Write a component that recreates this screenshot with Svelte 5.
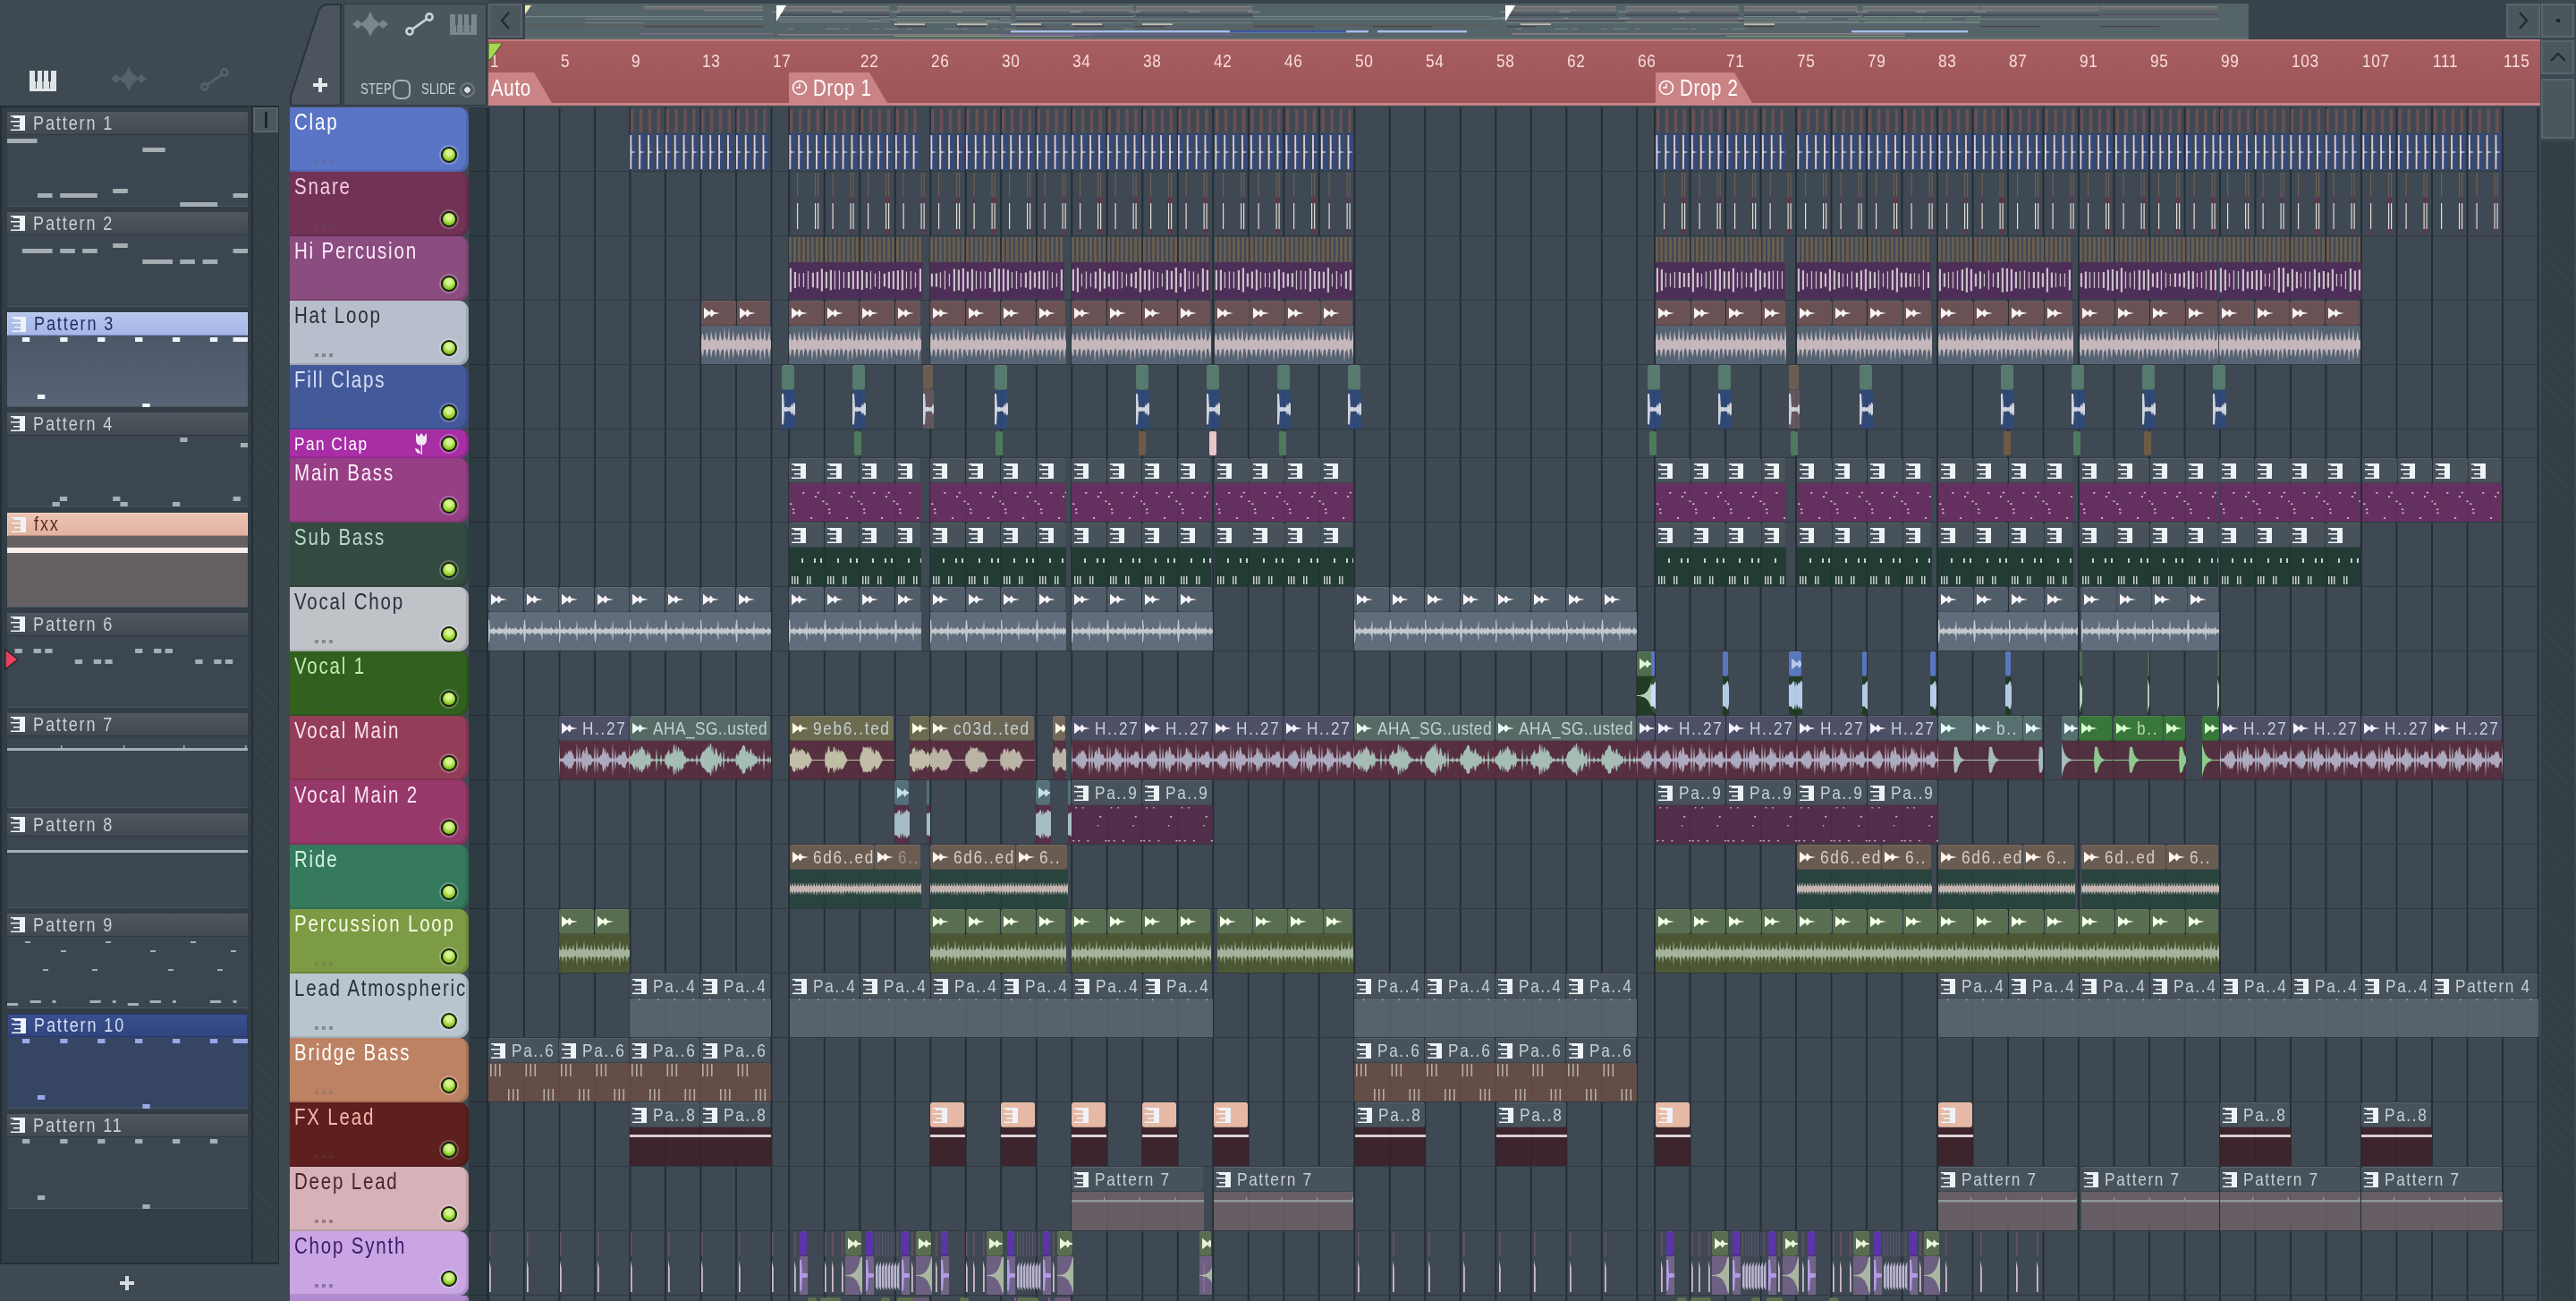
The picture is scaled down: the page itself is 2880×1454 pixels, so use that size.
<script>
  const BAR = 19.75;
  const LANE_X = 546;
  const bx = (b) => 0.5 + BAR * (b - 1);
  const lx = (x) => x - LANE_X;

  function rng(seed) {
    let s = seed * 9301 + 49297;
    return () => {
      s = (s * 9301 + 49297) % 233280;
      return s / 233280;
    };
  }

  function amp(type, x, n) {
    if (type === "hat") {
      const tri = 1 - Math.abs((x % 4.9) - 1.5) / 1.7;
      return Math.max(0.2 + 0.14 * n, tri * (0.8 + 0.2 * n));
    }
    if (type === "chop") {
      if (x % 19.75 < 1.2) return 0.62;
      if (x % 6 < 1) return 0.26;
      return 0.07 + 0.1 * n;
    }
    if (type === "hmain") {
      const q = x % 19.75;
      if (q < 1) return 0.95;
      if (q > 3 && q < 4) return 0.6 + 0.2 * n;
      if (q > 5 && q < 17) return (0.2 + 0.42 * n) * (0.5 + 0.7 * Math.sin((Math.PI * (q - 5)) / 12));
      return 0.06 + 0.08 * n;
    }
    if (type === "aha") {
      const q = x % 39.5;
      if (q < 24) return (0.25 + 0.6 * n) * (0.4 + 0.7 * Math.sin((Math.PI * q) / 24));
      return x % 5 < 1 ? 0.6 * n + 0.1 : 0.05;
    }
    if (type === "burst") {
      const q = x % 39.5;
      if (q < 20) return (0.42 + 0.5 * n) * (q < 3 ? 0.6 : 1) * (1 - q / 60);
      return q < 25 ? (0.5 * (25 - q)) / 5 : 0.03;
    }
    if (type === "pluck") {
      const q = (x + 21.5) % 39.5;
      if (q < 3) return 0.72;
      return q < 12 ? Math.max(0.03, 0.72 * Math.exp(-(q - 3) / 2.6)) : 0.025;
    }
    if (type === "hit") return Math.max(0.025, 0.95 * Math.exp(-x / 3.5));
    if (type === "ride") return 0.13 + (x % 3 < 1 ? 0.2 : 0) + 0.05 * n;
    if (type === "perc") return 0.14 + (x % 4 < 1 ? 0.5 * n + 0.12 : 0.14 * n);
    if (type === "blob") return 0.45 + 0.5 * n;
    if (type === "rev") return Math.max(0.03, 0.95 * Math.exp((x - 17) / 4));
    if (type === "spike") return x < 2.5 ? 0.85 : x < 10 ? 0.08 + 0.08 * n : 0.5 * n;
    return 0.1;
  }

  function wave(type, w, seed = 3) {
    const h = 43;
    const mid = h / 2;
    const r = rng(seed);
    const top = [];
    const bottom = [];
    for (let x = 0; x <= w; x += 1) {
      const a = Math.min(1, amp(type, x, r())) * (mid - 1);
      top.push(`${x} ${(mid - a).toFixed(1)}`);
      bottom.unshift(`${x} ${(mid + a * (0.85 + 0.15 * r())).toFixed(1)}`);
    }
    return `M${top.join("L")}L${bottom.join("L")}Z`;
  }

  // small note marks for pattern clips, repeat every 39.5px
  function marks(kind, w) {
    const out = [];
    const r = rng(kind.length * 7);
    const base = [];
    if (kind === "bridge") {
      [0, 5, 10].forEach((o) => {
        base.push({ x: 2 + o, y: 1, w: 1.6, h: 14 });
        base.push({ x: 22 + o, y: 29, w: 1.6, h: 13 });
      });
    } else if (kind === "main") {
      for (let i = 0; i < 8; i++) base.push({ x: r() * 38, y: 3 + r() * 36, w: 2.2, h: 1.6 });
    } else if (kind === "sub") {
      [3, 6, 9, 20, 23].forEach((x) => base.push({ x, y: 32, w: 1.5, h: 9 }));
      [14, 28, 35].forEach((x) => base.push({ x, y: 12, w: 2, h: 5 }));
    } else if (kind === "nine") {
      for (let i = 0; i < 5; i++) base.push({ x: r() * 38, y: 2 + (i % 3) * 10, w: 1.5, h: 1.5 });
      for (let i = 0; i < 4; i++) base.push({ x: r() * 38, y: 39, w: 2, h: 1.4 });
    } else if (kind === "atmos") {
      [10, 31].forEach((x) => base.push({ x, y: 0, w: 1.4, h: 2.2 }));
    }
    for (let o = 0; o < w; o += 39.5) {
      base.forEach((m) => {
        if (o + m.x < w - 1) out.push({ ...m, x: o + m.x });
      });
    }
    if (kind === "fx") out.push({ x: 0, y: 8, w, h: 3 });
    if (kind === "deep") {
      out.push({ x: 0, y: 9, w, h: 2.5 });
      for (let o = 36; o < w; o += 39.5) out.push({ x: o, y: 6, w: 1.4, h: 4 });
    }
    return out;
  }

  function tile(from, to, step, style, name) {
    const list = [];
    for (let x = from; x < to - 1; x += step) {
      list.push(clip(x, Math.min(step, to - x), style, name));
    }
    return list;
  }

  function clip(x, w, style, name = "") {
    const c = { ...style, x: lx(x), w, name };
    if (c.wave) c.d = wave(c.wave, Math.ceil(w), c.seed);
    if (c.notes) c.rects = marks(c.notes, w);
    return c;
  }

  const hat = { icon: "wave", hc: "#6a5153", bc: "#5a6878", wf: "#dccacd", wave: "hat" };
  const vchop = { icon: "wave", hc: "#505c68", bc: "#677483", wf: "#d8dde2", wave: "chop" };
  const hMain = { icon: "wave", hc: "#4d4f66", bc: "#5a2c3e", wf: "#bfb9d0", wave: "hmain", ic: "#f4eefc" };
  const aha = { icon: "wave", hc: "#566a66", bc: "#5a2c3e", wf: "#b7d0c7", wave: "aha", ic: "#e8fbf2" };
  const eb = { icon: "wave", hc: "#6c6b50", bc: "#5a2c3e", wf: "#d6d2b4", wave: "burst", ic: "#fbfbe6" };
  const c03 = { icon: "wave", hc: "#6b6656", bc: "#5a2c3e", wf: "#cfc6b4", wave: "burst", seed: 8, ic: "#fbfbe6" };
  const teal = { icon: "wave", hc: "#55706e", bc: "#552c3c", wf: "#b7ced0", wave: "pluck", ic: "#eafcff" };
  const green = { icon: "wave", hc: "#38763a", bc: "#552c3c", wf: "#9be09b", wave: "pluck", ic: "#d8ffd0", tc: "#b9d8b0" };
  const rideS = { icon: "wave", hc: "#6b5c52", bc: "#26443c", wf: "#d9c6bf", wave: "ride", ic: "#fff6ee", tc: "#d8cfc8" };
  const percS = { icon: "wave", hc: "#596d50", bc: "#4d5a2f", wf: "#b5c6a8", wave: "perc", ic: "#f4ffe8" };
  const pat = { icon: "pat", hc: "#48525b", bc: "#5a6570" };
  const mainB = { ...pat, bc: "#6a2d62", notes: "main", nf: "#e6d8e6" };
  const subB = { ...pat, bc: "#1f3931", notes: "sub", nf: "#dfe8e2" };
  const nine = { ...pat, bc: "#542b49", notes: "nine", nf: "#d8c8d6" };
  const atmos = { ...pat, bc: "#5c6772", notes: "atmos", nf: "#aab4bc" };
  const bridge = { ...pat, bc: "#6a4e44", notes: "bridge", nf: "#c9bcb2" };
  const fxP = { ...pat, bc: "#3e1f26", notes: "fx", nf: "#f2e4e0" };
  const fxPink = { icon: "pat", hc: "#e6b9a6", bc: "#3e1f26", notes: "fx", nf: "#f6ece8" };
  const deep = { ...pat, bc: "#6e6268", notes: "deep", nf: "#9aa6a9" };

  // start and end of the repeating sections, in page px
  const drop1 = [[882, 1030], [1040, 1192], [1198, 1354], [1358, 1513]];
  const drop2 = [[1851, 1997], [2009, 2160], [2167, 2318], [2325, 2480]];
  const drop2Long = [...drop2, [2481, 2640]];
  const drop2All = [...drop2Long, [2641, 2797]];

  const inGroups = (groups, step, style, name) => groups.flatMap(([a, b]) => tile(a, b, step, style, name));

  function ticks(groups, every, draw) {
    const paths = {};
    groups.forEach(([a, b]) => {
      for (let x = a; x < b - 2; x += every) draw(x - LANE_X, paths, x - a);
    });
    return Object.entries(paths).map(([fill, d]) => ({ fill, d }));
  }
  const add = (paths, fill, d) => (paths[fill] = (paths[fill] || "") + d);
  const box = (x, y, w, h) => `M${x} ${y}h${w}v${h}h${-w}Z`;

  const clapDense = ticks([[704, 862], ...drop1, ...drop2All], 9.875, (x, p) => {
    add(p, "#6a5054", box(x + 1, 2, 3.5, 26));
    add(p, "#35497a", box(x + 0.5, 29, 6.6, 41));
    add(p, "#d8ccd2", `M${x + 0.4} 31L${x + 2.2} 31L${x + 2.4} 49L${x + 7} 50L${x + 2.4} 51L${x + 2.2} 69L${x + 0.4} 69Z`);
  });

  const snareDense = ticks([...drop1, ...drop2All], 39.5, (x, p) => {
    [9, 29, 32].forEach((o) => {
      if (x + o + LANE_X > 2797) return;
      add(p, "#6f5f52", box(x + o, 1, 1.2, 27));
      add(p, "#6b2d4e", box(x + o, 28, 1.2, 7));
      add(p, "#e4dcd2", box(x + o, 35, 1.2, 29));
      add(p, "#6b2d4e", box(x + o, 64, 1.2, 6));
    });
  });

  const r3 = rng(11);
  const hiDense = ticks([...drop1, ...drop2Long], 5, (x, p, o) => {
    const big = o % 40 < 6 || o % 40 > 24;
    add(p, "#685c50", box(x, 1, 3, 28));
    add(p, "#4e2d58", box(x, 29, 4.8, 41));
    const h = 7 + r3() * (big ? 7 : 4);
    add(p, "#c9bec6", box(x + 0.8, 49 - h, big ? 2.2 : 1.3, h * 2));
  });

  const fillXs = [874, 953, 1032, 1112, 1270, 1349, 1428, 1507, 1842, 1921, 2000, 2079, 2237, 2316, 2395, 2474];
  const fillClaps = fillXs.map((x) => {
    const brown = x === 1032 || x === 2000;
    return clip(x, brown ? 12 : 15, {
      hc: brown ? "#6a5c50" : "#577a6e",
      bc: brown ? "#6b5a60" : "#2f4a7c",
      wf: "#e6eaf4",
      wave: "spike",
    });
  });

  const panMarks = [
    [955, "#4d7a5d"], [1113, "#4d7a5d"], [1273, "#6e5a46"], [1352, "#ecc4cc"], [1430, "#4d7a5d"],
    [1844, "#4d7a5d"], [2002, "#4d7a5d"], [2240, "#6e5a46"], [2318, "#4d7a5d"], [2397, "#6e5a46"],
  ];

  const blue = { hc: "#5a76bf", bc: "#1e3a1e", wf: "#c8e2ff", wave: "blob" };
  const vocal1 = [
    clip(1830, 21, { icon: "wave", hc: "#4f6b50", bc: "#1e3a1e", wf: "#c8e8d0", wave: "rev", ic: "#dcf8d8" }),
    clip(1846, 5, blue),
    clip(1926, 7, blue),
    clip(2000, 15, { ...blue, icon: "wave", ic: "#b8c8e8" }),
    clip(2082, 6, blue),
    clip(2158, 7, blue),
    clip(2242, 7, blue),
    clip(2325, 3, { hc: "#4f6b50", bc: "#1e3a1e", wf: "#c8e8d0", wave: "hit" }),
    clip(2401, 2, { hc: "#4f6b50", bc: "#1e3a1e", wf: "#c8e8d0", wave: "hit" }),
    clip(2479, 2, { hc: "#4f6b50", bc: "#1e3a1e", wf: "#c8e8d0", wave: "hit" }),
  ];

  const chopGreen = { icon: "wave", hc: "#5a6d50", bc: "#76648a", wf: "#bccab0", wave: "rev", ic: "#e8f4d8" };
  const chopPurple = { hc: "#5a34a8", bc: "#7a6a90", wf: "#c8a8ff", wave: "spike" };
  const chopCycle = (x0) => [
    clip(x0 + 6, 9, chopPurple),
    clip(x0 + 57, 19, chopGreen),
    clip(x0 + 80, 9, chopPurple),
    clip(x0 + 120, 9, chopPurple),
    clip(x0 + 136, 18, chopGreen),
  ];
  const chopClips = [
    ...chopCycle(888),
    ...chopCycle(1046),
    clip(1341, 14, chopGreen),
    ...chopCycle(1857),
    ...chopCycle(2015),
  ];

  const thinXs = [547, 589, 626, 668, 705, 747, 784, 826, 863, 1345, 1518, 1557, 1597, 1636, 1676, 1715, 1755, 1794, 2175, 2214, 2254, 2277];
  const massXs = [];
  [888, 1046, 1857, 2015].forEach((x0) => {
    [0, 34, 42, 53, 131].forEach((o) => thinXs.push(x0 + o));
    for (let o = 91; o < 115; o += 3.4) massXs.push(x0 + o);
  });
  const chopDense = [
    ...ticks(thinXs.map((x) => [x, x + 2.5]), 5, (x, p) => {
      add(p, "#6b5060", box(x, 1, 1.6, 27));
      add(p, "#cdbacb", `M${x} 33L${x + 1.8} 41L${x + 1.8} 68L${x} 68Z`);
    }),
    ...ticks(massXs.map((x) => [x, x + 2.5]), 5, (x, p) => {
      add(p, "#5f5874", box(x, 1, 1, 27));
      add(p, "#bdb6d2", `M${x} 40L${x + 2.6} 34L${x + 2.6} 66L${x} 62Z`);
    }),
  ];

  const tracks = [
    { name: "Clap", bg: "#5a75c5", fg: "#ffffff", dense: clapDense },
    { name: "Snare", bg: "#723256", fg: "#f3cbdc", dense: snareDense },
    { name: "Hi Percusion", bg: "#8b4c80", fg: "#fbeafa", dense: hiDense },
    {
      name: "Hat Loop", bg: "#b7bfcc", fg: "#28303a",
      clips: [...tile(784, 862, 39.5, hat), ...inGroups(drop1, 39.5, hat), ...inGroups(drop2Long, 39.5, hat)],
    },
    { name: "Fill Claps", bg: "#43599a", fg: "#d6e0f6", clips: fillClaps },
    { name: "Pan Clap", bg: "#a82ea6", fg: "#ffffff", short: true, tulip: true, marks: panMarks },
    {
      name: "Main Bass", bg: "#963f84", fg: "#fbecf8",
      clips: [...inGroups(drop1, 39.5, mainB), ...inGroups(drop2All, 39.5, mainB)],
    },
    {
      name: "Sub Bass", bg: "#334a40", fg: "#b8d6ca",
      clips: [...inGroups(drop1, 39.5, subB), ...inGroups(drop2Long, 39.5, subB)],
    },
    {
      name: "Vocal Chop", bg: "#bfc3c8", fg: "#2a2f3a",
      clips: inGroups([[546, 862], [882, 1030], [1040, 1192], [1198, 1356], [1514, 1830], [2167, 2323], [2327, 2481]], 39.5, vchop),
    },
    { name: "Vocal 1", bg: "#32601f", fg: "#c4ecb4", clips: vocal1 },
    {
      name: "Vocal Main", bg: "#933d58", fg: "#fae2e9",
      clips: [
        clip(625, 79, hMain, "H..27"),
        clip(704, 158, aha, "AHA_SG..usted"),
        clip(883, 117, eb, "9eb6..ted"),
        clip(1017, 23, eb),
        clip(1040, 117, c03, "c03d..ted"),
        clip(1177, 15, { ...c03, hc: "#75695c" }),
        ...tile(1198, 1514, 79, hMain, "H..27"),
        clip(1514, 158, aha, "AHA_SG..usted"),
        clip(1672, 158, aha, "AHA_SG..usted"),
        clip(1830, 21, hMain),
        ...tile(1851, 2167, 79, hMain, "H..27"),
        clip(2167, 39, teal),
        clip(2206, 56, teal, "b.."),
        clip(2262, 22, teal),
        clip(2305, 19, { ...teal, wave: "hit" }),
        clip(2324, 38, green),
        clip(2363, 56, green, "b.."),
        clip(2419, 25, green),
        clip(2462, 20, { ...green, wave: "hit" }),
        ...tile(2482, 2798, 79, hMain, "H..27"),
      ],
    },
    {
      name: "Vocal Main 2", bg: "#96386a", fg: "#fbe4f0",
      clips: [
        clip(1000, 17, { icon: "wave", hc: "#55707a", bc: "#5a2c48", wf: "#b7d0d8", wave: "blob", ic: "#c8e0e8" }),
        clip(1036, 4, { hc: "#55707a", bc: "#5a2c48", wf: "#b7d0d8", wave: "blob" }),
        clip(1158, 17, { icon: "wave", hc: "#55707a", bc: "#5a2c48", wf: "#b7d0d8", wave: "blob", ic: "#c8e0e8" }),
        clip(1194, 4, { hc: "#55707a", bc: "#5a2c48", wf: "#b7d0d8", wave: "blob" }),
        ...tile(1198, 1356, 79, nine, "Pa..9"),
        ...tile(1851, 2167, 79, nine, "Pa..9"),
      ],
    },
    {
      name: "Ride", bg: "#367a5e", fg: "#d4f0e2",
      clips: [
        clip(883, 95, rideS, "6d6..ed"),
        clip(978, 52, { ...rideS, tc: "#9c9086" }, "6.."),
        clip(1040, 96, rideS, "6d6..ed"),
        clip(1136, 58, rideS, "6.."),
        clip(2009, 95, rideS, "6d6..ed"),
        clip(2104, 56, rideS, "6.."),
        clip(2167, 95, rideS, "6d6..ed"),
        clip(2262, 58, rideS, "6.."),
        clip(2327, 95, rideS, "6d..ed"),
        clip(2422, 59, rideS, "6.."),
      ],
    },
    {
      name: "Percussion Loop", bg: "#7d9a44", fg: "#f6fbe4",
      clips: inGroups([[625, 704], [1040, 1192], [1198, 1354], [1361, 1513], [1851, 2481]], 39.5, percS),
    },
    {
      name: "Lead Atmospheric", bg: "#b8c5cf", fg: "#25323c",
      clips: [
        ...tile(704, 862, 79, atmos, "Pa..4"),
        ...tile(883, 1356, 79, atmos, "Pa..4"),
        ...tile(1514, 1830, 79, atmos, "Pa..4"),
        ...tile(2167, 2719, 79, atmos, "Pa..4"),
        clip(2719, 119, atmos, "Pattern 4"),
      ],
    },
    {
      name: "Bridge Bass", bg: "#bd8264", fg: "#ffffff",
      clips: [...tile(546, 862, 79, bridge, "Pa..6"), ...tile(1514, 1830, 79, bridge, "Pa..6")],
    },
    {
      name: "FX Lead", bg: "#5e1f1f", fg: "#f2b8ab",
      clips: [
        ...tile(704, 862, 79, fxP, "Pa..8"),
        ...[1040, 1119, 1198, 1277, 1357, 1851, 2167].map((x) => clip(x, 39, fxPink)),
        ...[1515, 1673, 2482, 2640].map((x) => clip(x, 79, fxP, "Pa..8")),
      ],
    },
    {
      name: "Deep Lead", bg: "#d6b2b8", fg: "#4a1f28",
      clips: [
        [1198, 148], [1357, 156], [2167, 155], [2327, 154], [2482, 157], [2640, 158],
      ].map(([x, w]) => clip(x, w, deep, "Pattern 7")),
    },
    { name: "Chop Synth", bg: "#c9a6e3", fg: "#3a1a6a", dense: chopDense, clips: chopClips },
  ];

  const stubs = [
    [903, 10, "#5f7050"], [917, 23, "#5f7050"], [985, 10, "#5f7050"], [1003, 18, "#5f7050"], [1021, 18, "#6a5a78"],
    [1073, 10, "#5f7050"], [1134, 2, "#b040b0"], [1137, 24, "#5f7050"], [1172, 2, "#b040b0"], [1179, 18, "#6a5a78"],
    [1875, 10, "#5f7050"], [1890, 23, "#5f7050"], [1958, 10, "#5f7050"], [1975, 18, "#5f7050"], [2045, 10, "#5f7050"],
  ];

  const rulerMarks = [
    1, 5, 9, 13, 17, 22, 26, 30, 34, 38, 42, 46, 50, 54, 58, 62, 66,
    71, 75, 79, 83, 87, 91, 95, 99, 103, 107, 111, 115,
  ];

  const gridXs = [];
  for (let b = 1; b <= 17; b += 2) gridXs.push(bx(b));
  for (let b = 18; b <= 66; b += 2) gridXs.push(bx(b));
  for (let b = 67; b <= 117; b += 2) gridXs.push(bx(b));

  // the overview strip is the same arrangement shrunk to 16.6px a bar
  const ox = (x) => 0.5 + x * 0.8405;
  const overview = [];
  tracks.forEach((t, i) => {
    const y = 3 + i * 1.38;
    (t.clips || []).forEach((c) => {
      overview.push({ x: ox(c.x), w: Math.max(1, c.w * 0.8405), y, h: 1.2, fill: c.wf || c.bc, o: c.wf ? 0.3 : 0.5 });
    });
    if (t.dense) {
      [[704, 862], ...drop1, ...drop2All].forEach(([a, b]) => {
        if (t.name === "Chop Synth") return;
        overview.push({ x: ox(a - LANE_X), w: (b - a) * 0.8405, y, h: 1.2, fill: i ? "#8a7a74" : "#a89c98", o: 0.6 });
      });
    }
  });
  [[1130, 400, "#a9bce8"], [1375, 130, "#3e56a0"], [1540, 100, "#a9bce8"], [2070, 130, "#a9bce8"]].forEach(([x, w, fill]) => {
    overview.push({ x: x - 587, w, y: 30, h: 2.4, fill, o: 1 });
  });
  [[715, 150, "#8a6a90"], [870, 350, "#9a7f8c"], [1690, 440, "#9a7f8c"], [1120, 260, "#7a5aa8"]].forEach(([x, w, fill], i) => {
    overview.push({ x: x - 587, w, y: 33 + (i % 2), h: 1.6, fill, o: 0.8 });
  });
  [[1000, 200, "#8aa070"], [1930, 200, "#8aa070"]].forEach(([x, w, fill]) => {
    overview.push({ x: x - 587, w, y: 36, h: 1, fill, o: 0.9 });
  });
  [[1000, 34], [1070, 34], [1130, 34], [1198, 34], [1277, 34], [1700, 34], [1950, 34]].forEach(([x, w]) => {
    overview.push({ x: x - 587, w, y: 22.5, h: 1.2, fill: "#f3e2d8", o: 1 });
  });

  // panel previews: zoom x range, y inside the preview body
  const note = (a, b, y) => ({ x: a / 2.529 - 8, w: (b - a) / 2.529, y, h: 5 });
  const eightNotes = [63, 170, 276, 382, 488, 594];
  const patterns = [
    {
      name: "Pattern 1",
      notes: [
        note(20, 105, 4), note(403, 467, 14), note(106, 148, 65), note(170, 275, 65),
        note(319, 361, 60), note(509, 615, 75), note(659, 701, 65),
      ],
    },
    {
      name: "Pattern 2",
      notes: [
        note(63, 148, 15), note(170, 212, 15), note(233, 275, 15), note(319, 361, 9),
        note(403, 488, 27), note(509, 551, 27), note(573, 615, 27), note(659, 701, 15),
      ],
    },
    {
      name: "Pattern 3", cls: "sel-light",
      notes: [...eightNotes.map((x) => note(x, x + 21, 2)), note(659, 701, 2), note(106, 127, 66), note(403, 424, 76)],
    },
    {
      name: "Pattern 4",
      notes: [
        note(509, 530, 2), note(680, 701, 8), note(148, 169, 74), note(169, 190, 68),
        note(319, 340, 68), note(340, 361, 74), note(488, 509, 74), note(659, 680, 68),
      ],
    },
    { name: "fxx", cls: "sel-pink", notes: [{ x: 0, y: 13, w: 269, h: 6 }] },
    {
      name: "Pattern 6", playing: true,
      notes: [
        ...[42, 95, 127, 382, 435, 467].map((x) => note(x, x + 21, 14)),
        ...[212, 265, 297, 552, 605, 637].map((x) => note(x, x + 21, 26)),
      ],
    },
    {
      name: "Pattern 7",
      notes: [
        { x: 0, y: 13, w: 269, h: 3 },
        ...[60, 130, 197, 266].map((x) => ({ x, y: 10, w: 1.5, h: 4 })),
      ],
    },
    { name: "Pattern 8", notes: [{ x: 0, y: 15, w: 269, h: 3 }] },
    {
      name: "Pattern 9",
      notes: [
        ...[20, 60, 110, 160, 205, 250].map((x, i) => ({ x, y: 5 + (i % 2) * 10, w: 6, h: 2 })),
        ...[40, 95, 180, 235].map((x) => ({ x, y: 36, w: 6, h: 2 })),
        ...[85, 254, 424, 594].map((x) => ({ ...note(x, x + 31, 71), h: 3 })),
        ...[148, 318, 488, 659].map((x) => ({ ...note(x, x + 10, 71), h: 3 })),
        ...[20, 361].map((x) => ({ ...note(x, x + 31, 74), h: 3 })),
      ],
    },
    {
      name: "Pattern 10", cls: "sel-blue",
      notes: [...eightNotes.map((x) => note(x, x + 21, 2)), note(659, 701, 2), note(106, 127, 65), note(403, 424, 75)],
    },
    {
      name: "Pattern 11",
      notes: [...eightNotes.map((x) => note(x, x + 21, 2)), note(106, 127, 65), note(403, 424, 75)],
    },
  ];
</script>

{#snippet patIcon()}
  <svg class="pat-icon" width="16" height="17" viewBox="0 0 16 17">
    <path d="M0 0H16V17H0V15.5H10V12.5H3V11H10V7.5H0V6H10V3H3V1.5H0Z" fill="currentColor" />
  </svg>
{/snippet}

{#snippet waveIcon()}
  <svg class="wave-icon" width="18" height="14" viewBox="0 0 20 14">
    <path d="M0 0L7 5.5L9.5 2L12.5 5.6L20 7L12.5 8.4L9.5 12L7 8.5L0 14Z" fill="currentColor" />
  </svg>
{/snippet}

{#snippet pianoIcon(color)}
  <svg width="30" height="23" viewBox="0 0 30 23">
    <path fill-rule="evenodd" fill={color} d="M0 0H30V23H0ZM6 0V12H7V20H8V12H9V0ZM14 0V12H14.5V20H15.5V12H16V0ZM21 0V12H22V20H23V12H24V0Z" />
  </svg>
{/snippet}

{#snippet peakIcon(color)}
  <svg width="40" height="28" viewBox="0 0 40 28">
    <path fill={color} d="M0 14L6 9L10 13L16 8L20 0L24 8L30 13L34 9L40 14L34 19L30 15L24 20L20 28L16 20L10 15L6 19Z" />
  </svg>
{/snippet}

{#snippet linkIcon(color)}
  <svg width="32" height="26" viewBox="0 0 32 26">
    <g fill="none" stroke={color} stroke-width="2.6">
      <circle cx="5" cy="21" r="3.6" />
      <circle cx="27" cy="5" r="3.6" />
      <path d="M8 18.6L24 7.4" />
    </g>
  </svg>
{/snippet}

{#snippet clipView(c)}
  <div class="clip" style="left:{c.x}px;width:{c.w}px">
    <div class="clip-head" style="background:{c.hc};color:{c.tc || '#c6d0d6'}">
      {#if c.icon === "wave"}
        <span class="glyph" style="color:{c.ic || '#f6f2f4'}">{@render waveIcon()}</span>
      {:else if c.icon === "pat"}
        <span class="glyph" style="color:#eef3f6">{@render patIcon()}</span>
      {/if}
      {#if c.name}<span class="nar clip-name" class:long={c.name.length > 10}>{c.name}</span>{/if}
    </div>
    <div class="clip-body" style="background:{c.bc}">
      <svg width={c.w} height="43">
        {#if c.d}<path d={c.d} fill={c.wf} />{/if}
        {#if c.rects}
          {#each c.rects as m}
            <rect x={m.x} y={m.y} width={m.w} height={m.h} fill={c.nf} />
          {/each}
        {/if}
      </svg>
    </div>
  </div>
{/snippet}

<div class="app">
  <aside class="browser">
    <div class="modes">
      {@render pianoIcon("#dfe5e8")}
      {@render peakIcon("#566169")}
      {@render linkIcon("#566169")}
    </div>
    <div class="pick">
      <div class="plist">
        {#each patterns as p}
          <div class="pat {p.cls || ''}">
            <div class="pat-head">
              <span class="glyph pat-glyph">{@render patIcon()}</span>
              <span class="nar">{p.name}</span>
            </div>
            <div class="pat-body">
              <svg width="269" height="80">
                {#each p.notes as n}
                  <rect x={n.x} y={n.y} width={n.w} height={n.h} />
                {/each}
              </svg>
              {#if p.playing}
                <svg class="play" width="16" height="24" viewBox="0 0 16 24">
                  <path d="M1 1L15 12L1 23Z" fill="#e8405c" stroke="#1c2328" stroke-width="1.2" />
                </svg>
              {/if}
            </div>
          </div>
        {/each}
      </div>
      <div class="pscroll"><div class="pthumb"></div></div>
    </div>
    <div class="add-row">
      <svg width="16" height="16" viewBox="0 0 16 16"><path d="M6 0h4v6h6v4h-6v6H6v-6H0V6h6z" fill="#d6dde0" /></svg>
    </div>
  </aside>

  <main class="play-area">
    <header class="head">
      <div class="head-tabs">
        <div class="new-tab">
          <svg class="new-shape" width="58" height="114" viewBox="0 0 58 114">
            <path d="M1 114V104L32 9Q35 1 42 1H57V114Z" fill="#4c555d" stroke="#2a343b" stroke-width="2" />
          </svg>
          <svg class="new-plus" width="16" height="16" viewBox="0 0 16 16"><path d="M6 0h4v6h6v4h-6v6H6v-6H0V6h6z" fill="#e4e9ec" /></svg>
        </div>
        <div class="tool-panel">
          <div class="tool-icons">
            {@render peakIcon("#7b878d")}
            {@render linkIcon("#c9d2d6")}
            {@render pianoIcon("#7b878d")}
          </div>
          <div class="step-row">
            <span class="nar step-txt">STEP</span>
            <span class="step-box"></span>
            <span class="nar slide">SLIDE</span>
            <span class="slide-dot"></span>
          </div>
        </div>
      </div>
      <div class="head-time">
        <div class="nav">
          <div class="nav-btn">
            <svg width="12" height="20" viewBox="0 0 12 20"><path d="M10 1L2 10L10 19" fill="none" stroke="#1e272d" stroke-width="2" /></svg>
          </div>
          <div class="overview">
            <svg class="ov" width="1927" height="38">
              {#each overview as r}
                <rect x={r.x} y={r.y} width={r.w} height={r.h} fill={r.fill} opacity={r.o} />
              {/each}
              <path d="M0 2H7L0 12Z" fill="#f2e9a8" />
              <path d="M281 2H292L281 20Z" fill="#ffffff" />
              <path d="M1096 2H1107L1096 20Z" fill="#ffffff" />
            </svg>
          </div>
          <div class="nav-rest"></div>
          <div class="nav-btn">
            <svg width="12" height="20" viewBox="0 0 12 20"><path d="M2 1L10 10L2 19" fill="none" stroke="#1e272d" stroke-width="2" /></svg>
          </div>
        </div>
        <div class="ruler">
          {#each rulerMarks as b}
            <span class="nar tick" style="left:{bx(b) + 1}px">{b}</span>
          {/each}
          <svg class="flag" width="16" height="20" viewBox="0 0 16 20"><path d="M0 0H16L2 19H0Z" fill="#a6d94e" stroke="#39462a" stroke-width="1" /></svg>
          <span class="marker" style="left:0;width:71px"><span class="nar">Auto</span></span>
          <span class="marker" style="left:{882 - LANE_X}px;width:110px">
            <svg width="18" height="18" viewBox="0 0 18 18"><circle cx="9" cy="9" r="7.5" fill="none" stroke="#fff" stroke-width="1.6" /><path d="M9 4.5V9H5" fill="none" stroke="#fff" stroke-width="1.4" /></svg>
            <span class="nar">Drop 1</span>
          </span>
          <span class="marker" style="left:{1851 - LANE_X}px;width:108px">
            <svg width="18" height="18" viewBox="0 0 18 18"><circle cx="9" cy="9" r="7.5" fill="none" stroke="#fff" stroke-width="1.6" /><path d="M9 4.5V9H5" fill="none" stroke="#fff" stroke-width="1.4" /></svg>
            <span class="nar">Drop 2</span>
          </span>
        </div>
      </div>
    </header>

    <section class="rows">
      <svg class="gridlines" width="2294" height="1334">
        {#each gridXs as x}
          <rect x={x - 1} y="0" width="2" height="1334" />
        {/each}
      </svg>
      {#each tracks as t}
        <div class="row" class:short={t.short}>
          <div class="label" class:label-short={t.short} style="background:{t.bg};color:{t.fg}">
            <span class="nar label-name">{t.name}</span>
            {#if t.short}
              {#if t.tulip}
                <svg class="tulip" width="16" height="24" viewBox="0 0 16 24">
                  <path d="M2 0L5 4L8 0L11 4L14 0V8Q14 13 8 14Q2 13 2 8Z" fill="#f4e6f6" />
                  <path d="M9 14V24H7.6V14ZM1 17Q6 17 7 23Q2 23 1 17Z" fill="#f4e6f6" />
                </svg>
              {/if}
              <span class="led"></span>
            {:else}
              <div class="label-foot">
                <span class="dots"><i></i><i></i><i></i></span>
                <span class="led"></span>
              </div>
            {/if}
          </div>
          <div class="gutter"></div>
          <div class="lane">
            {#if t.dense}
              <svg class="dense" width="2292" height="71">
                {#each t.dense as p}
                  <path d={p.d} fill={p.fill} />
                {/each}
              </svg>
            {/if}
            {#if t.marks}
              {#each t.marks as [x, fill]}
                <span class="pan-mark" style="left:{lx(x)}px;background:{fill}"></span>
              {/each}
            {/if}
            {#if t.clips}
              {#each t.clips as c}
                {@render clipView(c)}
              {/each}
            {/if}
          </div>
        </div>
      {/each}
      <div class="row stub-row">
        <div class="label stub-label"></div>
        <div class="gutter"></div>
        <div class="lane">
          {#each stubs as [x, w, fill]}
            <span class="stub" style="left:{lx(x)}px;width:{w}px;background:{fill}"></span>
          {/each}
        </div>
      </div>
    </section>
  </main>

  <aside class="vscroll">
    <div class="v-btn"><span class="v-dot"></span></div>
    <div class="v-btn">
      <svg width="18" height="12" viewBox="0 0 18 12"><path d="M1 10L9 2L17 10" fill="none" stroke="#1e272d" stroke-width="2" /></svg>
    </div>
    <div class="v-thumb"></div>
    <div class="v-track"></div>
  </aside>
</div>

<style>
  :global(body) { margin: 0; background: #3f4951; overflow: hidden; }

  .app {
    display: flex; width: 2880px; height: 1454px; overflow: hidden;
    background: #3f4951; color: #c6d0d6;
    font-family: "Liberation Sans", Arial, sans-serif;
  }

  /* the UI font is tall and narrow, none of the installed ones is */
  .nar { display: inline-block; flex: none; white-space: nowrap; transform: scaleX(0.82); transform-origin: 0 50%; }

  .browser { width: 312px; flex: none; display: flex; flex-direction: column; margin-right: 12px; }
  .modes {
    height: 118px; box-sizing: border-box; padding: 0 56px 16px 33px;
    display: flex; align-items: flex-end; justify-content: space-between;
  }
  .pick {
    height: 1295px; display: flex; background: #323d45;
    border: solid #242e35; border-width: 2px 2px 2px 2px; box-sizing: border-box;
  }
  .plist { width: 276px; flex: none; box-sizing: border-box; padding: 5px 0 0 6px; }
  .pat { width: 269px; margin-bottom: 6px; }
  .pat-head {
    height: 26px; box-sizing: border-box; display: flex; align-items: center; gap: 7px; padding-left: 4px;
    background: linear-gradient(#50575e, #424a51); color: #c8d2d6;
    font-size: 22px; letter-spacing: 2.3px; line-height: 26px;
    border-bottom: 1px solid #2f383f;
  }
  .pat-glyph { color: #eef3f6; }
  .pat-body { height: 80px; position: relative; background: #3b4650; box-shadow: inset 0 -1px 0 #485560; }
  .pat-body svg { display: block; }
  .pat-body rect { fill: #a4aeb3; }
  .play { position: absolute; left: -3px; top: 14px; overflow: visible; }

  .sel-light .pat-head { background: linear-gradient(#b7c6ee, #a6b6e6); color: #1f2f63; border: 1px solid #c9d5f5; border-bottom: 1px solid #8090c8; }
  .sel-light .pat-body { background: linear-gradient(#4c5868, #576476); }
  .sel-light .pat-body rect { fill: #f2f5fa; }
  .sel-pink .pat-head { background: linear-gradient(#ecc3b1, #e0b3a0); color: #5c2a1c; border: 1px solid #f2d2c4; border-bottom: 1px solid #b98b7a; }
  .sel-pink .pat-body { background: #656062; }
  .sel-pink .pat-body rect { fill: #f8efea; }
  .sel-blue .pat-head { background: linear-gradient(#394f8e, #30457f); color: #d5def5; border: 1px solid #27386e; }
  .sel-blue .pat-body { background: #364563; }
  .sel-blue .pat-body rect { fill: #97a9e8; }

  .pscroll { width: 28px; flex: none; margin-left: 3px; background: repeating-linear-gradient(45deg, #3a444b 0 1px, #323c43 1px 3px); border-left: 2px solid #242e35; }
  .pthumb { height: 28px; background: #4c565d; border: 2px solid #5a646b; box-sizing: border-box; position: relative; }
  .pthumb::after { content: ""; position: absolute; left: 11px; top: 3px; width: 3px; height: 18px; background: #1d262c; }
  .add-row { flex: 1; display: flex; align-items: center; justify-content: center; padding-right: 28px; }

  .play-area { width: 2516px; flex: none; display: flex; flex-direction: column; }

  .head { height: 120px; flex: none; display: flex; }
  .head-tabs { width: 222px; flex: none; display: flex; padding-top: 4px; box-sizing: border-box; height: 118px; gap: 3px; }
  .new-tab { width: 57px; flex: none; position: relative; display: flex; align-items: flex-end; justify-content: center; padding: 0 0 15px 10px; box-sizing: border-box; }
  .new-shape { position: absolute; left: 0; top: 0; }
  .new-plus { position: relative; }
  .tool-panel {
    width: 160px; flex: none; box-sizing: border-box; background: #4c565d;
    border: 1px solid #2c363d; display: flex; flex-direction: column; justify-content: space-between;
    padding: 7px 10px 6px 9px;
  }
  .tool-icons { display: flex; justify-content: space-between; align-items: center; height: 30px; }
  .step-row { display: flex; align-items: center; font-size: 16px; letter-spacing: 0.2px; color: #c6d0d6; padding-left: 9px; }
  .step-txt { width: 31px; }
  .step-box { width: 20px; height: 22px; flex: none; box-sizing: border-box; border: 2px solid #a8b2b8; border-radius: 7px; margin-left: 5px; }
  .slide { margin-left: 12px; width: 38px; }
  .slide-dot {
    width: 17px; height: 17px; flex: none; box-sizing: border-box; border-radius: 50%; margin-left: 5px;
    border: 2px solid #6d787f; background: radial-gradient(circle, #d8dfe2 0 3px, #4c565d 3.6px);
  }

  .head-time { flex: 1; display: flex; flex-direction: column; min-width: 0; }
  .nav { height: 44px; flex: none; display: flex; box-sizing: border-box; padding-top: 4px; background: #39434b; }
  .nav-btn {
    width: 38px; height: 38px; flex: none; box-sizing: border-box; background: #4c565d;
    border: 2px solid #5a646b; display: flex; align-items: center; justify-content: center;
  }
  .overview { width: 1927px; flex: none; margin-left: 3px; background: #546468; box-shadow: inset 0 -2px 0 #61716f; }
  .ov { display: block; }
  .nav-rest { flex: 1; }
  .ruler {
    height: 74px; flex: none; position: relative; overflow: hidden;
    background: linear-gradient(#a85e60, #9c5557); border-top: 2px solid #c47a7c; border-bottom: 3px solid #c98487; box-sizing: border-box;
  }
  .tick { position: absolute; top: 10px; font-size: 21px; line-height: 24px; letter-spacing: 0.8px; color: #f8dcdc; }
  .flag { position: absolute; left: 0; top: 2px; }
  .marker {
    position: absolute; bottom: 0; height: 34px; display: flex; align-items: center; gap: 6px; padding-left: 3px; box-sizing: border-box;
    background: #cb8486; color: #fff; font-size: 25px; letter-spacing: 0.8px; white-space: nowrap;
    clip-path: polygon(0 0, calc(100% - 20px) 0, 100% 100%, 0 100%);
  }
  .marker svg { flex: none; }

  .rows { position: relative; flex: 1; background: #3f4953; overflow: hidden; }
  .gridlines { position: absolute; left: 222px; top: 0; }
  .gridlines rect { fill: #242e36; }
  .row { position: relative; display: flex; height: 72px; }
  .row.short { height: 32px; }
  .stub-row { height: 8px; }
  .label {
    width: 200px; flex: none; box-sizing: border-box; position: relative; overflow: hidden;
    padding: 0 11px 8px 5px; display: flex; flex-direction: column; justify-content: space-between; align-items: stretch;
    border-radius: 0 11px 11px 0; box-shadow: inset -3px -2px 0 rgba(0, 0, 0, 0.12);
  }
  .label-name { font-size: 25px; line-height: 32px; letter-spacing: 2.2px; align-self: flex-start; }
  .label-foot { display: flex; align-items: flex-end; justify-content: space-between; }
  .dots { display: flex; gap: 4px; margin-left: 23px; margin-bottom: 1px; opacity: 0.32; }
  .dots i { width: 4px; height: 4px; background: currentColor; filter: brightness(0.4); }
  .led {
    width: 18px; height: 18px; box-sizing: border-box; border-radius: 50%; flex: none; margin: 2px;
    border: 2px solid #16200c; box-shadow: 0 0 0 2px rgba(255, 255, 255, 0.22);
    background: radial-gradient(circle at 50% 35%, #d8f590 0 25%, #94d02e 60%, #5f9a18);
  }
  .label-short { flex-direction: row; align-items: center; padding: 0 11px 0 5px; }
  .label-short .label-name { font-size: 21px; letter-spacing: 1.8px; margin-right: auto; align-self: center; }
  .tulip { margin-right: 12px; flex: none; }
  .stub-label { background: #b08ad0; }
  .gutter { width: 22px; flex: none; background: #2f3b43; box-shadow: inset 0 -1px 0 #232d34, inset -2px 0 0 #232d34; }
  .lane { position: relative; flex: 1; box-shadow: inset 0 -1px 0 #2f3840; }
  .dense { position: absolute; left: 0; top: 0; }
  .pan-mark { position: absolute; top: 2px; width: 8px; height: 27px; border-radius: 2px; }
  .stub { position: absolute; top: 2px; height: 6px; border-radius: 2px 2px 0 0; }

  .clip { position: absolute; top: 0; height: 71px; overflow: hidden; }
  .clip-head {
    height: 28px; margin: 0 1px 0 0; box-sizing: border-box; border-radius: 3px; overflow: hidden;
    display: flex; align-items: center; gap: 5px; padding-left: 3px; white-space: nowrap;
    box-shadow: inset 0 1px 0 rgba(255, 255, 255, 0.1), inset 0 -1px 0 rgba(0, 0, 0, 0.15);
    font-size: 21px; letter-spacing: 2px;
  }
  .glyph { display: flex; flex: none; width: 18px; }
  .clip-body { height: 43px; opacity: 0.86; }
  .clip-body svg { display: block; }
  .clip-name { line-height: 28px; }
  .clip-name.long { letter-spacing: 0.6px; }

  .vscroll { flex: 1; display: flex; flex-direction: column; gap: 3px; padding: 4px 2px 0 1px; background: #3d4850; }
  .v-btn {
    height: 38px; flex: none; box-sizing: border-box; background: #4c565d; border: 2px solid #5a646b;
    display: flex; align-items: center; justify-content: center;
  }
  .v-dot { width: 4px; height: 4px; background: #1e272d; }
  .v-thumb { height: 67px; flex: none; box-sizing: border-box; background: #4c565d; border: 2px solid #5a646b; margin-top: 2px; }
  .v-track { flex: 1; background: repeating-linear-gradient(45deg, #3a444b 0 1px, #323c43 1px 3px); }
</style>
